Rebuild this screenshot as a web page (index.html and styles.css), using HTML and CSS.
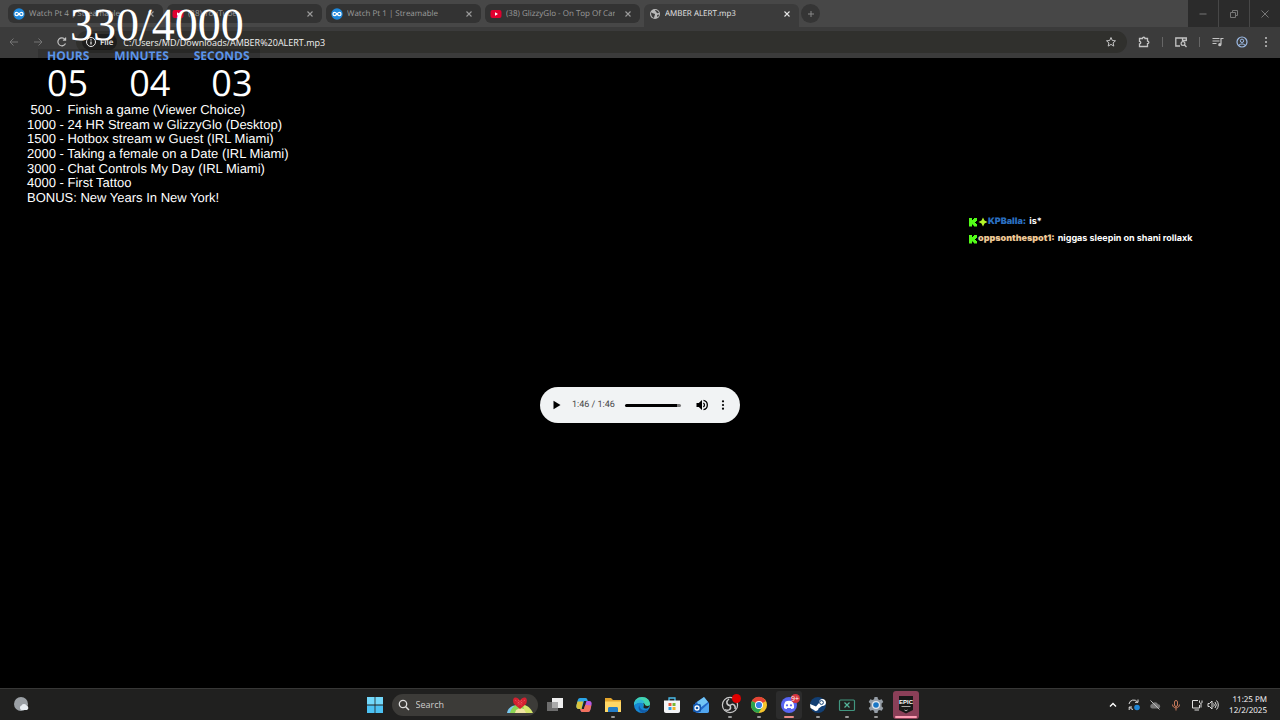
FILE: index.html
```html
<!DOCTYPE html>
<html lang="en">
<head>
  <meta charset="UTF-8">
  <meta name="viewport" content="width=device-width, initial-scale=1.0">
  <title>AMBER ALERT.mp3</title>
  <link rel="stylesheet" href="styles.css">
</head>
<body>

<svg class="defs" aria-hidden="true">
  <symbol id="close" viewBox="0 0 10 10"><path d="M2.5 2.5l5 5M7.5 2.5l-5 5" stroke="currentColor" stroke-width="1.1" fill="none"/></symbol>
  <symbol id="streamable" viewBox="0 0 12 12"><circle cx="6" cy="6" r="5.7" fill="#1e88dc"/><path d="M6 6C5 4.8 4.500 4.300 3.700 4.300a1.700 1.700 0 0 0 0 3.400C4.500 7.700 5 7.200 6 6s1.500-1.700 2.300-1.700a1.700 1.700 0 0 1 0 3.400C7.500 7.700 7 7.200 6 6z" stroke="#fff" stroke-width="1.200" fill="none"/></symbol>
  <symbol id="youtube" viewBox="0 0 12 12"><rect x="0.500" y="2" width="11" height="8" rx="2" fill="#e0002f"/><path d="M5 4.300L8 6 5 7.700z" fill="#fff"/></symbol>
  <symbol id="kick" viewBox="0 0 10 10"><path d="M1 1h3v2h1V2h1V1h3v3H8v1H7v1h1v1h1v2.500H6V8.500H5v-1H4v2H1z" fill="#53fc18"/></symbol>
</svg>

<header class="browser">
  <div class="tab-strip">
    <nav class="tabs" aria-label="Tabs">
      <div class="tab">
        <svg class="favicon"><use href="#streamable"/></svg>
        <span class="tab-title">Watch Pt 4 | Streamable</span>
        <button class="tab-close" aria-label="Close tab"><svg><use href="#close"/></svg></button>
      </div>
      <div class="tab">
        <svg class="favicon"><use href="#youtube"/></svg>
        <span class="tab-title">(38) YouTube</span>
        <button class="tab-close" aria-label="Close tab"><svg><use href="#close"/></svg></button>
      </div>
      <div class="tab">
        <svg class="favicon"><use href="#streamable"/></svg>
        <span class="tab-title">Watch Pt 1 | Streamable</span>
        <button class="tab-close" aria-label="Close tab"><svg><use href="#close"/></svg></button>
      </div>
      <div class="tab">
        <svg class="favicon"><use href="#youtube"/></svg>
        <span class="tab-title">(38) GlizzyGlo - On Top Of Cars</span>
        <button class="tab-close" aria-label="Close tab"><svg><use href="#close"/></svg></button>
      </div>
      <div class="tab active">
        <svg class="favicon" viewBox="0 0 12 12"><circle cx="6" cy="6" r="5" fill="#b9b9b9"/><path d="M2 4.500c1.500.3 2 1 3.500 1.200.8.200.5 1.500 0 2L5 10C3 9.500 2 7.500 2 4.500zM6 2c0 1.500 1.200 1.300 1.500 2.500.3.800 1.500.7 2.500.5C9.500 3 8 2 6 2zM8 7l2-.5c0 1.300-.8 2.300-1.500 2.700z" fill="#3c3c3c"/></svg>
        <span class="tab-title">AMBER ALERT.mp3</span>
        <button class="tab-close" aria-label="Close tab"><svg><use href="#close"/></svg></button>
      </div>
    </nav>
    <button class="new-tab" aria-label="New tab"><svg viewBox="0 0 10 10"><path d="M5 2v6M2 5h6" stroke="currentColor"/></svg></button>
    <div class="window-controls">
      <button aria-label="Minimize"><svg viewBox="0 0 10 10"><path d="M1.500 5h7" stroke="currentColor"/></svg></button>
      <button aria-label="Restore"><svg viewBox="0 0 10 10"><path d="M1.500 3.500h5v5h-5zM3.500 3V1.500h5v5H7" stroke="currentColor" fill="none"/></svg></button>
      <button aria-label="Close"><svg viewBox="0 0 10 10"><path d="M1.500 1.500l7 7M8.500 1.500l-7 7" stroke="currentColor"/></svg></button>
    </div>
  </div>

  <div class="toolbar">
    <div class="nav-buttons">
      <button class="dim" aria-label="Back"><svg viewBox="0 0 12 12"><path d="M10 6H2.500M5.500 2.500L2 6l3.500 3.500" stroke="currentColor" fill="none"/></svg></button>
      <button class="dim" aria-label="Forward"><svg viewBox="0 0 12 12"><path d="M2 6h7.500M6.500 2.500L10 6 6.500 9.500" stroke="currentColor" fill="none"/></svg></button>
      <button aria-label="Reload"><svg viewBox="0 0 12 12"><path d="M9.500 7.500a4 4 0 1 1-.5-4.200M9.600 1.500v2.700H6.900" stroke="currentColor" stroke-width="1.200" fill="none"/></svg></button>
    </div>
    <div class="omnibox">
      <span class="file-chip"><svg viewBox="0 0 12 12"><circle cx="6" cy="6" r="4.500" stroke="currentColor" fill="none"/><path d="M6 5.500v3M6 3.300v1.200" stroke="currentColor" stroke-width="1.200"/></svg>File</span>
      <input type="text" aria-label="Address" value="C:/Users/MD/Downloads/AMBER%20ALERT.mp3">
      <button aria-label="Bookmark this tab"><svg viewBox="0 0 12 12"><path d="M6 1.500l1.300 3 3.200.3-2.400 2.100.7 3.200L6 8.400l-2.800 1.700.7-3.200-2.400-2.100 3.200-.3z" stroke="currentColor" fill="none"/></svg></button>
    </div>
    <div class="toolbar-actions">
      <button aria-label="Extensions"><svg viewBox="0 0 12 12"><path d="M1.500 2.500h3c0-1.700 2.500-1.700 2.500 0h2.500v2.700c1.800.1 1.800 2.300 0 2.400v2.900h-8V7.900c1.700-.2 1.700-2.300 0-2.500z" stroke="currentColor" stroke-width="1.300" fill="none"/></svg></button>
      <span class="divider"></span>
      <button aria-label="Search with Lens"><svg viewBox="0 0 12 12"><path d="M5 10H.800V2h10.500v3M7.500 2v2.500h4" stroke="currentColor" stroke-width="1.300" fill="none"/><circle cx="8" cy="7.500" r="1.900" stroke="currentColor" stroke-width="1.200" fill="none"/><path d="M9.300 8.800l2.200 2.200" stroke="currentColor" stroke-width="1.300"/></svg></button>
      <span class="divider"></span>
      <button aria-label="Media controls"><svg viewBox="0 0 12 12"><path d="M.500 2.500h7M.500 5h7M.500 7.500h4M9 8.500V2.500h2.500" stroke="currentColor" stroke-width="1.200" fill="none"/><circle cx="7.800" cy="8.700" r="1.600" fill="currentColor"/></svg></button>
      <button class="profile" aria-label="Profile"><svg viewBox="0 0 12 12"><circle cx="6" cy="6" r="5" stroke="currentColor" stroke-width="1.200" fill="none"/><circle cx="6" cy="4.800" r="1.700" stroke="currentColor" fill="none"/><path d="M2.800 9.300C4 7.500 8 7.500 9.200 9.300" stroke="currentColor" fill="none"/></svg></button>
      <button aria-label="Menu"><svg viewBox="0 0 12 12"><g fill="currentColor"><circle cx="6" cy="2" r="1"/><circle cx="6" cy="6" r="1"/><circle cx="6" cy="10" r="1"/></g></svg></button>
    </div>
  </div>
</header>

<main class="page">
  <div class="player">
    <button aria-label="Play"><svg viewBox="0 0 12 12"><path d="M2.500 1.800L9.500 6l-7 4.200z" fill="currentColor"/></svg></button>
    <span class="time">1:46 / 1:46</span>
    <input class="seek" type="range" min="0" max="106" value="106" aria-label="Seek">
    <button aria-label="Mute"><svg viewBox="0 0 12 12"><path d="M.500 4h2.300l3.200-3v10L2.800 8H.500z" fill="currentColor"/><path d="M7.300 4a2.300 2.300 0 0 1 0 4M7.500 1.300a4.800 4.800 0 0 1 0 9.400" stroke="currentColor" stroke-width="1.300" fill="none"/></svg></button>
    <button aria-label="More options"><svg viewBox="0 0 12 12"><g fill="currentColor"><circle cx="6" cy="2.300" r="1.100"/><circle cx="6" cy="6" r="1.100"/><circle cx="6" cy="9.700" r="1.100"/></g></svg></button>
  </div>
</main>

<!-- stream overlay -->
<section class="overlay">
  <div class="goal">330/4000</div>
  <div class="countdown">
    <div class="labels"><span>HOURS</span><span>MINUTES</span><span>SECONDS</span></div>
    <div class="digits"><span>05</span><span>04</span><span>03</span></div>
  </div>
  <div class="goals"> 500 -  Finish a game (Viewer Choice)
1000 - 24 HR Stream w GlizzyGlo (Desktop)
1500 - Hotbox stream w Guest (IRL Miami)
2000 - Taking a female on a Date (IRL Miami)
3000 - Chat Controls My Day (IRL Miami)
4000 - First Tattoo
BONUS: New Years In New York!</div>
</section>

<section class="chat">
  <p>
    <svg><use href="#kick"/></svg>
    <svg viewBox="0 0 10 10"><path d="M5 0.500L6.500 3.500 9.500 5 6.500 6.500 5 9.500 3.500 6.500.500 5l3-1.500z" fill="#b5f52a"/></svg>
    <b class="user-blue">KPBalla:</b> <span>is*</span>
  </p>
  <p>
    <svg><use href="#kick"/></svg>
    <b class="user-tan">oppsonthespot1:</b> <span>niggas sleepin on shani rollaxk</span>
  </p>
</section>

<footer class="taskbar">
  <button class="weather" aria-label="Weather"><svg viewBox="0 0 18 18"><circle cx="8" cy="8" r="7" fill="#9ba0a5"/><path d="M8.500 14a2.400 2.400 0 0 1 0-4.500 3 3 0 0 1 5.300.3 2.200 2.200 0 0 1 0 4.200z" fill="#e9eef3"/></svg></button>

  <div class="dock">
    <button class="app" aria-label="Start"><svg viewBox="0 0 18 18"><path d="M1 1h7.600v7.600H1zM9.400 1H17v7.600H9.400z" fill="#72d8fa"/><path d="M1 9.400h7.600V17H1zM9.400 9.400H17V17H9.400z" fill="#4cc2f3"/></svg></button>
    <label class="search">
      <svg class="lens" viewBox="0 0 12 12"><circle cx="5" cy="5" r="3.700" stroke="currentColor" stroke-width="1.300" fill="none"/><path d="M7.700 7.700l3.300 3.300" stroke="currentColor" stroke-width="1.500"/></svg>
      <input type="text" placeholder="Search" aria-label="Search">
      <svg class="doodle" viewBox="0 0 26 16"><path d="M0 16C1 11 5 8 9 8.500L15 16z" fill="#79c9ef"/><path d="M3 16c1-5 5-9 10-9 6 0 9 4 11 9z" fill="#8bd453"/><path d="M16 8c5 0 8 4 10 8h-8z" fill="#d5e66a"/><path d="M9 13l4-2 4 1 2 4H8z" fill="#f0e4a2"/><path d="M13 12L7 7C5.500 4 6 1 8 .500c2-.3 3.500 1 5 3 1.500-2 3-3.300 5-3 2 .5 2.500 3.500 1 6.500z" fill="#d3202f"/><path d="M8 3l8 6M18 3l-8 6M11 3l5 4M15 3l-5 4" stroke="#ff7880" stroke-width=".6" stroke-dasharray="1 1"/></svg>
    </label>
    <div class="apps">
      <button class="app" aria-label="Task view"><svg viewBox="0 0 18 18"><path d="M6 2h11v10H6z" fill="#eee"/><path d="M1 6h11v9H1z" fill="#6d6d6d"/><path d="M6 6h6v6H6z" fill="#aaa"/></svg></button>
      <button class="app" aria-label="Copilot"><svg viewBox="0 0 18 18"><path d="M5 2h5.500c1.500 0 1.800 1.300 2.300 3H9L6.500 13H4C1.500 13 1 11 1.500 9l1.300-5C3.200 2.800 4 2 5 2z" fill="#2aa5e8"/><path d="M1.500 9l1-3.500h5.700L6.500 13H4c-2.500 0-3-2-2.500-4z" fill="#d9c33c"/><path d="M13 16H7.500c-1.500 0-1.800-1.300-2.300-3H9l2.500-8H14c2.500 0 3 2 2.500 4l-1.300 5c-.4 1.200-1.200 2-2.200 2z" fill="#b85be5"/><path d="M16.300 9.500l-1 4.300C15 15.200 14 16 13 16H7.500c-1.500 0-1.800-1.300-2.300-3H9l1.200-4z" fill="#f2725d"/></svg></button>
      <button class="app running" aria-label="File Explorer"><svg viewBox="0 0 18 18"><path d="M1 2h6l2 2h8v5H1z" fill="#e4a52c"/><path d="M1 5.500h16V16H1z" fill="#ffd766"/><path d="M4 16v-3.500c0-1 .7-1.500 1.500-1.500h7c.8 0 1.500.5 1.500 1.500V16z" fill="#247ec8"/></svg></button>
      <button class="app" aria-label="Edge"><svg viewBox="0 0 18 18"><circle cx="9" cy="9" r="8" fill="#1687d3"/><path d="M1 9C1 4 4.500 1 9 1c5 0 8 3.500 8 7 0 2.800-2 4-4.200 4-1.600 0-2.800-.7-2.300-1.600C11.500 8.500 10 6.500 7 6.500 4 6.500 2 8 1 9z" fill="#42d5ae"/><path d="M1 9C1 5.500 3.500 3.500 7 3.500c3 0 5 2.500 4.500 5C10.500 7 9 6.500 7 6.500 4 6.500 2 8 1 9z" fill="#2fb9d8"/><path d="M6.500 9c-.5 4 4 6.500 9 4.600C13.500 16 11.500 17 9.500 17 6 15.500 4.500 12 6.500 9z" fill="#125ca8"/><path d="M17 9c-1 3-3 3.500-4.500 3.500-1.500 0-2.500-.8-2-2 .7-1.500.3-2.500-.5-3.500 1 0 2 1 2 2 1.500 1.500 3.500 1 5 0z" fill="#20201f"/></svg></button>
      <button class="app" aria-label="Microsoft Store"><svg viewBox="0 0 18 18"><path d="M6 5V2h6v3" stroke="#49bceb" stroke-width="1.300" fill="none"/><path d="M1 4.500h16V15c0 1-.7 2-2 2H3c-1.300 0-2-1-2-2z" fill="#f4f5f7"/><path d="M5.500 7h3v3h-3z" fill="#e85738"/><path d="M9.500 7h3v3h-3z" fill="#79b832"/><path d="M5.500 11h3v3h-3z" fill="#2c9fe5"/><path d="M9.500 11h3v3h-3z" fill="#f0b429"/></svg></button>
      <button class="app" aria-label="Outlook"><svg viewBox="0 0 18 18"><path d="M3 7l9-6 5 6v8c0 1-1 2-2 2H5c-1 0-2-1-2-2z" fill="#2467c7"/><path d="M5 6l7-5 4 5-8 6z" fill="#72c5f5"/><path d="M17 7v8c0 1-1 2-2 2H6z" fill="#51a6ef"/><rect x="1" y="8" width="8" height="8" rx="1.500" fill="#1258ad"/><circle cx="5" cy="12" r="2" stroke="#fff" stroke-width="1.300" fill="none"/></svg></button>
      <button class="app running" aria-label="OBS Studio, recording"><svg viewBox="0 0 18 18"><circle cx="9" cy="9" r="7.600" stroke="#c9c9c9" stroke-width="1.200" fill="#222"/><path d="M9 9.500C5 9 5 5 8 3M9 9.500c3-3 6 0 5 3.500M9 9.500c2 4-2 6-5 4" stroke="#c9c9c9" stroke-width="1.500" fill="none"/></svg><span class="badge"></span></button>
      <button class="app running" aria-label="Chrome"><svg viewBox="0 0 18 18"><circle cx="9" cy="9" r="8" fill="#f7c52d"/><path d="M9 9L2 5a8 8 0 0 1 14 0z" fill="#e44335"/><path d="M9 9L2 5a8 8 0 0 0 6.500 12L12.500 11z" fill="#2ca34d"/><circle cx="9" cy="9" r="4" fill="#fff"/><circle cx="9" cy="9" r="3.100" fill="#367fe8"/></svg></button>
      <button class="app alerting" aria-label="Discord"><svg viewBox="0 0 18 18"><circle cx="9" cy="9" r="8" fill="#5865f2"/><path d="M5.500 5.500c2-1 5-1 7 0 1.300 2 1.800 4 1.500 6.500-1 .8-2 1-2.700 1l-.6-1H7.300l-.6 1c-.7 0-1.700-.2-2.700-1-.3-2.500.2-4.500 1.500-6.500z" fill="#fff"/><circle cx="7" cy="9.300" r="1.100" fill="#5865f2"/><circle cx="11" cy="9.300" r="1.100" fill="#5865f2"/></svg><span class="badge">9+</span></button>
      <button class="app running" aria-label="Steam"><svg viewBox="0 0 18 18"><circle cx="9" cy="9" r="8" fill="#123f74"/><path d="M1 8l6 2.500L10 7a3.500 3.500 0 1 1 3 3l-3.500 2.500A2.500 2.500 0 0 1 5 14L1.500 12z" fill="#fff"/><circle cx="12.500" cy="6.500" r="1.900" stroke="#123f74" fill="none"/></svg></button>
      <button class="app running" aria-label="Remote tool"><svg viewBox="0 0 18 18"><rect x="1.500" y="4" width="15" height="10.500" rx="1" stroke="#41957f" stroke-width="1.200" fill="none"/><path d="M6.500 6.500l5 5M11.500 6.500l-5 5" stroke="#56b79d" stroke-width="1.200"/></svg></button>
      <button class="app running" aria-label="Settings"><svg viewBox="0 0 18 18"><path d="M7.500 1h3l.5 2.300 1.500.8 2.200-.8 1.600 2.600L14.600 7.500v3l1.700 1.600-1.600 2.600-2.200-.8-1.500.8-.5 2.300h-3L7 14.700l-1.500-.8-2.200.8-1.600-2.600 1.700-1.600v-3L1.700 5.900l1.600-2.600 2.200.8L7 3.300z" fill="#959da6"/><circle cx="9" cy="9" r="4" fill="#e3e9ef"/><circle cx="9" cy="9" r="2.800" fill="#1976c5"/></svg></button>
      <button class="app epic" aria-label="Epic Games"><svg viewBox="0 0 18 18"><path d="M2 0h14v14L9 17.500 2 14z" fill="#171717"/><text x="9" y="8" text-anchor="middle">EPIC</text><path d="M4.500 10.500h9M7.500 14L9 14.800l1.500-.8" stroke="#ccc" stroke-width=".8" fill="none"/></svg></button>
    </div>
  </div>

  <div class="tray">
    <button aria-label="Show hidden icons"><svg viewBox="0 0 12 12"><path d="M3 7.500l3-3 3 3" stroke="#fff" stroke-width="1.400" fill="none"/></svg></button>
    <button aria-label="Update available"><svg viewBox="0 0 12 12"><path d="M1 5a4.700 4.700 0 0 1 8.500-2M10 .500V3.300H7M5 10.500A4.800 4.800 0 0 1 1.500 8M1.200 11V8H4" stroke="#ddd" fill="none"/><circle cx="9" cy="8.500" r="2.800" fill="#1f86d6"/></svg></button>
    <button aria-label="Not connected"><svg viewBox="0 0 12 12"><path d="M3 9.500a2.300 2.300 0 0 1 0-4.500 3.300 3.300 0 0 1 6 .3 2.100 2.100 0 0 1 .3 4.200z" fill="#777"/><path d="M1.500 1.500l9 9" stroke="#bbb"/></svg></button>
    <button aria-label="Microphone in use"><svg viewBox="0 0 12 12"><path d="M4.500 3a1.500 1.500 0 0 1 3 0v3a1.500 1.500 0 0 1-3 0zM2.500 5.500c0 4.500 7 4.500 7 0M6 9v2.500" stroke="#c8795a" fill="none"/></svg></button>
    <button class="sound" aria-label="Network and volume">
      <svg viewBox="0 0 12 12"><path d="M7 1.500H1.500v7.500h7V6M3.500 11H8M10 4.500V8.500M8.500 1.500v2c0 1 2.500 1 2.500 0v-2" stroke="#ddd" fill="none"/></svg>
      <svg viewBox="0 0 12 12"><path d="M1 4.500h1.500L5 2v8L2.500 7.500H1zM6.500 4.500a2 2 0 0 1 0 3M8 3a4.500 4.500 0 0 1 0 6M9.500 1.500a6.500 6.500 0 0 1 0 9" stroke="#ddd" fill="none"/></svg>
    </button>
    <div class="clock"><time>11:25 PM</time><time>12/2/2025</time></div>
  </div>
</footer>
</body>
</html>
```

FILE: styles.css
```css
* { box-sizing: border-box; }
body { margin: 0; min-height: 100vh; display: flex; flex-direction: column; background: #000; color: #fff; font-family: "Open Sans", "Noto Sans", sans-serif; font-size: 9px; text-rendering: geometricPrecision; overflow: hidden; }
button { border: 0; padding: 0; background: none; color: inherit; font: inherit; display: flex; align-items: center; justify-content: center; }
input { border: 0; padding: 0; background: none; color: inherit; font: inherit; min-width: 0; outline: 0; }
svg { display: block; width: 12px; height: 12px; flex: none; }
.defs { position: absolute; width: 0; height: 0; }

/* browser */
.browser { background: #3b3b3b; height: 58px; }
.tab-strip { display: flex; align-items: flex-start; height: 27px; background: #474747; padding-left: 8px; }
.tabs { display: flex; gap: 4px; padding-top: 4px; }
.tab { display: flex; align-items: center; width: 155px; height: 19px; padding: 0 7px 0 5px; border-radius: 6px; background: #333; color: #9b9b9b; }
.tab.active { height: 23px; padding-bottom: 4px; background: #3b3b3b; color: #e6e6e6; border-radius: 6px 6px 0 0; }
.tab-title { flex: 1; min-width: 0; margin: 0 8px 0 4px; font-size: 8px; overflow: hidden; white-space: nowrap; }
.tab-close svg { width: 10px; height: 10px; }
.new-tab { width: 19px; height: 19px; margin: 4px 0 0 2px; border-radius: 50%; background: #353535; color: #888; }
.new-tab svg { width: 10px; height: 10px; }
.window-controls { display: flex; gap: 1px; margin-left: auto; color: #777; }
.window-controls button { width: 30px; height: 27px; background: #2b2b2b; }
.window-controls svg { width: 10px; height: 10px; }

.toolbar { display: flex; align-items: center; height: 30px; padding: 0 8px; color: #c4c4c4; }
.nav-buttons { display: flex; gap: 12px; }
.nav-buttons .dim { color: #757575; }
.omnibox { flex: 1; display: flex; align-items: center; height: 22px; margin-left: 8px; padding: 0 10px 0 6px; border-radius: 11px; background: #30302d; }
.omnibox input { flex: 1; margin-left: 6px; color: #f0f0f0; }
.file-chip { display: flex; align-items: center; gap: 3px; height: 16px; padding: 0 4px 0 3px; border-radius: 8px; background: #1e1e1d; color: #eee; font-size: 8px; font-weight: 600; }
.toolbar-actions { display: flex; align-items: center; gap: 12px; margin-left: 11px; }
.divider { width: 1px; height: 10px; background: #666; }
.profile { color: #9dbbe6; }

/* audio player */
.page { flex: 1; display: flex; align-items: center; justify-content: center; padding-top: 64px; }
.player { display: flex; align-items: center; width: 200px; height: 36px; padding: 0 11px; border-radius: 18px; background: #f1f3f4; color: #000; font-family: Roboto, sans-serif; }
.time { margin: 0 10px 0 9px; color: #444; font-size: 9px; white-space: nowrap; }
.seek { appearance: none; flex: 1; height: 3px; margin: 0 15px 0 0; border-radius: 2px; background: linear-gradient(to right, #000 92%, #777 92%); }
.seek::-webkit-slider-thumb { appearance: none; width: 1px; height: 1px; }
.player button + button { margin-left: 9px; }

/* stream overlay */
.overlay { position: absolute; left: 27px; top: 0; }
.goal { margin-left: 43px; height: 49px; font: 46px/50px "Liberation Serif", serif; }
.countdown { margin-left: 11px; padding-left: 9px; width: 222px; background: rgba(0, 0, 0, 0.15); }
.labels { display: flex; gap: 25px; color: #5b94ea; font-size: 12px; line-height: 14px; font-weight: 700; }
.digits { display: flex; gap: 41px; font-size: 36px; line-height: 40px; }
.goals { font: 13px/1.13 "Liberation Sans", sans-serif; white-space: pre; }

/* chat */
.chat { position: absolute; left: 968px; top: 213px; font: 700 9px/17px Inter, sans-serif; }
.chat p { display: flex; align-items: center; margin: 0; white-space: nowrap; }
.chat svg { width: 10px; height: 10px; }
.chat b { margin-right: 3px; }
.user-blue { color: #2a6fc0; }
.user-tan { color: #edc795; }

/* taskbar */
.taskbar { display: grid; grid-template-columns: 1fr 557px 1fr; align-items: center; height: 32px; background: #20201f; border-top: 1px solid #373736; }
.weather { justify-self: start; margin-left: 13px; }
.weather svg { width: 18px; height: 18px; }
.dock { display: flex; align-items: center; gap: 4px; }
.app { position: relative; width: 26px; height: 28px; border-radius: 3px; }
.app svg { width: 18px; height: 18px; }
.search { display: flex; align-items: center; flex: none; width: 146px; height: 22px; padding: 0 5px 0 6px; border-radius: 11px; background: #3c3b38; color: #ddd; }
.search input { flex: 1; margin-left: 6px; }
.search input::placeholder { color: #ccc; opacity: 1; }
.doodle { width: 26px; height: 16px; }
.apps { flex: 1; display: flex; justify-content: space-between; }
.running::after, .alerting::after, .epic::after { content: ""; position: absolute; left: 50%; bottom: 1px; width: 4px; height: 2px; margin-left: -2px; border-radius: 1px; background: #999; }
.alerting { background: #2c2c2c; }
.alerting::after { width: 10px; margin-left: -5px; background: #e88a86; }
.epic { background: #8b3f58; }
.epic::after { width: 22px; margin-left: -11px; background: #ff9db4; }
.epic text { fill: #fff; font: 700 6px "Liberation Sans", sans-serif; }
.badge { position: absolute; right: 2px; top: 3px; min-width: 9px; height: 9px; border-radius: 5px; background: #e00000; font-size: 7px; line-height: 9px; text-align: center; }
.alerting .badge { background: #d63440; }
.tray { display: flex; align-items: center; justify-self: end; gap: 9px; padding-right: 13px; }
.sound { gap: 4px; }
.clock { display: flex; flex-direction: column; align-items: flex-end; width: 39px; font-size: 8px; line-height: 11px; white-space: nowrap; }
```
